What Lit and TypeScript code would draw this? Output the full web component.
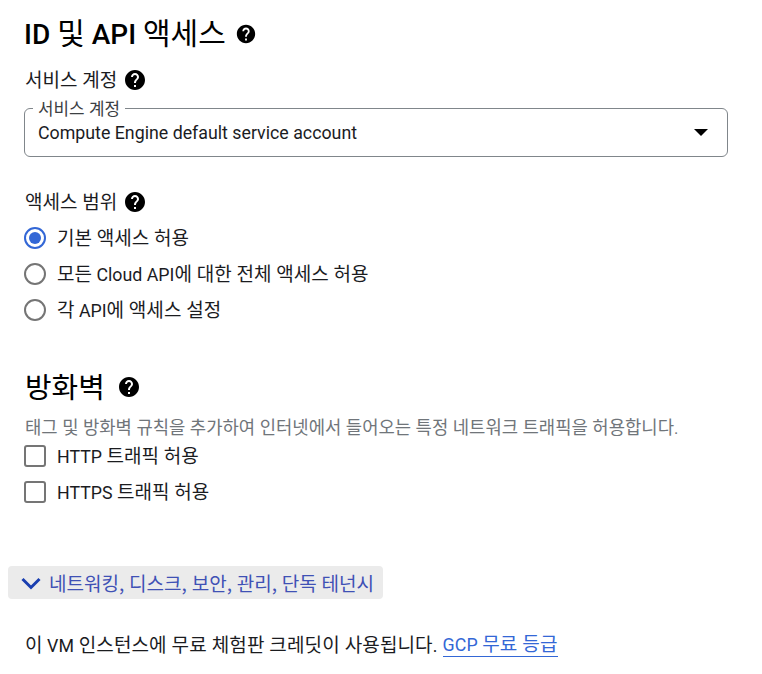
import { LitElement, html, css } from "lit";
import { customElement } from "lit/decorators.js";

const help = (size: number) => html`<svg class="help" width=${size} height=${size} viewBox="0 0 24 24"><path fill="#000" d="M12 2C6.48 2 2 6.48 2 12s4.48 10 10 10 10-4.48 10-10S17.52 2 12 2zm1 17h-2v-2h2v2zm2.07-7.75l-.9.92C13.45 12.9 13 13.5 13 15h-2v-.5c0-1.1.45-2.1 1.17-2.83l1.24-1.26c.37-.36.59-.86.59-1.41 0-1.1-.9-2-2-2s-2 .9-2 2H8c0-2.21 1.79-4 4-4s4 1.79 4 4c0 .88-.36 1.68-.93 2.25z"/></svg>`;

/* Splits a string into Hangul and Latin runs, since the two scripts are sized differently. */
const t = (text: string) =>
  text.split(/([\uAC00-\uD7A3]+(?:[ ,.]+[\uAC00-\uD7A3]+)*)/).map((part, i) =>
    i % 2 ? html`<span class="k">${part}</span>` : part);

@customElement("app-root")
export class AppRoot extends LitElement {
  static styles = css`
    :host { display: block; width: 762px; height: 674px; overflow: hidden; background: #fff; color: #1b1c1f;
      font-family: Roboto, "Noto Sans CJK KR", sans-serif; font-size: 17.8px; }
    .k { font-size: 1.07em; font-weight: 400; word-spacing: 0.5px; font-family: "Noto Sans CJK KR", sans-serif; }
    .page { padding: 15px 34px 0 24px; display: flex; flex-direction: column; }
    .help { display: block; flex: none; margin-top: 4px; }
    .h1 { display: flex; align-items: center; gap: 9px; height: 32px; font-size: 28px; font-weight: 500; color: #000; white-space: nowrap; }
    .h1 .help { margin-top: 6px; }
    .label { display: flex; align-items: center; gap: 6px; height: 24px; white-space: nowrap; margin-left: 1px; }
    .l1 { margin-top: 19px; }
    .field { position: relative; margin-top: 18px; height: 49px; box-sizing: border-box; border: 1px solid #80868b; border-radius: 6px;
      display: flex; align-items: center; justify-content: space-between; padding: 0 19px 0 13px; }
    .legend { position: absolute; left: 8px; top: -10px; padding: 0 5px; background: #fff; font-size: 15.8px; line-height: 18px; color: #3c4043; }
    .arrow { width: 0; height: 0; border-left: 7px solid transparent; border-right: 7px solid transparent; border-top: 7px solid #000; }
    .l2 { margin-top: 31px; }
    .options { display: flex; flex-direction: column; gap: 12px; margin-top: 12px; }
    .opt { display: flex; align-items: center; gap: 11px; height: 24px; white-space: nowrap; }
    .radio { width: 22px; height: 22px; box-sizing: border-box; border: 2px solid #757575; border-radius: 50%; display: flex; align-items: center; justify-content: center; flex: none; margin-top: 4px; }
    .radio.on { border-color: #3367d6; }
    .radio.on::after { content: ""; width: 12px; height: 12px; border-radius: 50%; background: #3367d6; }
    .check { width: 22px; height: 22px; box-sizing: border-box; border: 2px solid #757575; border-radius: 3px; flex: none; margin-top: 4px; }
    .h2 { display: flex; align-items: center; gap: 12px; height: 36px; margin-top: 47px; font-size: 27px; color: #000; margin-left: 1px; }
    .desc { margin-top: 13px; margin-left: 1px; font-size: 16.6px; line-height: 20px; color: #70757a; white-space: nowrap; }
    .checks { display: flex; flex-direction: column; gap: 12px; margin-top: 3px; }
    .more { align-self: flex-start; margin: 64px 0 0 -16px; width: 375px; height: 33px; box-sizing: border-box; border-radius: 4px; background: #ebebeb;
      display: flex; align-items: center; gap: 7px; padding-left: 12px; color: #3f51b5; white-space: nowrap; }
    .foot { margin-top: 32px; margin-left: 1px; height: 24px; display: flex; align-items: center; gap: 5px; letter-spacing: 0.1px; white-space: nowrap; }
    .foot a { color: #3367d6; text-decoration: none; border-bottom: 1px solid #3367d6; }
  `;
  render() {
    return html`<div class="page">
      <div class="h1"><span>${t("ID 및 API 액세스")}</span>${help(22)}</div>
      <div class="label l1"><span>${t("서비스 계정")}</span>${help(24)}</div>
      <div class="field"><span class="legend">${t("서비스 계정")}</span><span>${t("Compute Engine default service account")}</span><span class="arrow"></span></div>
      <div class="label l2"><span>${t("액세스 범위")}</span>${help(24)}</div>
      <div class="options">
        <div class="opt"><span class="radio on"></span><span>${t("기본 액세스 허용")}</span></div>
        <div class="opt"><span class="radio"></span><span>${t("모든 Cloud API에 대한 전체 액세스 허용")}</span></div>
        <div class="opt"><span class="radio"></span><span>${t("각 API에 액세스 설정")}</span></div>
      </div>
      <div class="h2"><span>${t("방화벽")}</span>${help(24)}</div>
      <div class="desc">${t("태그 및 방화벽 규칙을 추가하여 인터넷에서 들어오는 특정 네트워크 트래픽을 허용합니다.")}</div>
      <div class="checks">
        <div class="opt"><span class="check"></span><span>${t("HTTP 트래픽 허용")}</span></div>
        <div class="opt"><span class="check"></span><span>${t("HTTPS 트래픽 허용")}</span></div>
      </div>
      <div class="more">
        <svg width="22" height="22" viewBox="0 0 22 22"><path d="M2.500 7l8.500 8.500L19.500 7" fill="none" stroke="#1a3fb0" stroke-width="3"/></svg>
        <span>${t("네트워킹, 디스크, 보안, 관리, 단독 테넌시")}</span>
      </div>
      <div class="foot"><span>${t("이 VM 인스턴스에 무료 체험판 크레딧이 사용됩니다.")}</span><a>${t("GCP 무료 등급")}</a></div>
    </div>`;
  }
}
